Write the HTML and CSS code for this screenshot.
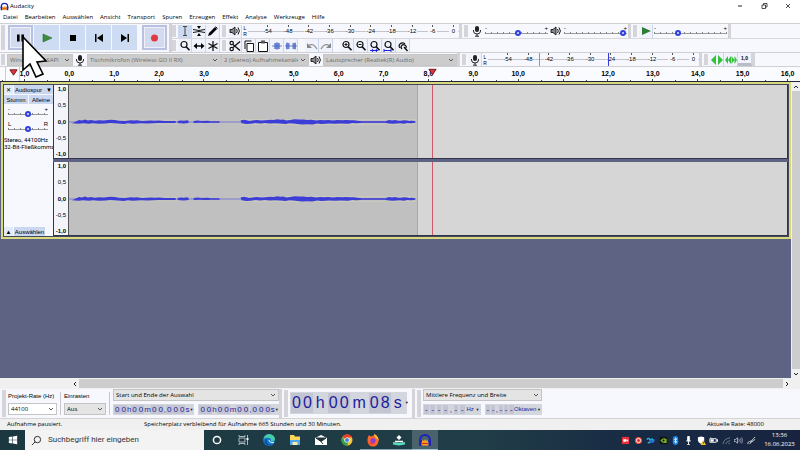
FILE: index.html
```html
<!DOCTYPE html>
<html lang="de">
<head>
  <meta charset="utf-8">
  <title>Audacity</title>
  <link rel="stylesheet" href="styles.css">
</head>
<body>

<!-- shared icons -->
<svg class="sprite" aria-hidden="true">
  <symbol id="mic" viewBox="0 0 12 12"><rect x="4" y="1" width="4" height="6" rx="2" fill="#222"/><path d="M2.500 5v1a3.500 3 0 0 0 7 0V5M6 9v2M4 11.200h4" fill="none" stroke="#222"/></symbol>
  <symbol id="speaker" viewBox="0 0 12 12"><path d="M1 4.500h2L6 2v8L3 7.500H1z" fill="#888" stroke="#111" stroke-width=".9"/><path d="M7.500 4q1.500 2 0 4M9 2.500q2.800 3.500 0 7" fill="none" stroke="#111"/></symbol>
  <symbol id="lens" viewBox="0 0 12 12"><circle cx="5" cy="4.500" r="3" fill="none" stroke="#111" stroke-width="1.200"/><path d="M7.200 6.700l3.300 3.600" stroke="#111" stroke-width="1.700"/></symbol>
  <symbol id="headphones" viewBox="0 0 14 14"><path d="M2 9V7a5 5 0 0 1 10 0v2" fill="none" stroke="#1c24b8" stroke-width="2"/><rect x="1" y="7" width="3" height="6" rx="1" fill="#1c24b8"/><rect x="10" y="7" width="3" height="6" rx="1" fill="#1c24b8"/><path d="M3.500 10l1-3 1.500 1 1-2 1 2 1.500-1 1 3v2.500h-7z" fill="#f9a21c"/><path d="M4 10.500h6" stroke="#d22"/></symbol>
</svg>

<header class="titlebar">
  <svg class="logo"><use href="#headphones"/></svg>
  <h1>Audacity</h1>
  <button class="win" aria-label="Minimieren"><svg viewBox="0 0 8 8"><path d="M2 4h4" stroke="#222"/></svg></button>
  <button class="win" aria-label="Verkleinern"><svg viewBox="0 0 8 8"><path d="M2 3h3.500v3.500H2zM3.500 3V1.500H7V5H5.500" fill="none" stroke="#222" stroke-width=".8"/></svg></button>
  <button class="win" aria-label="Schließen"><svg viewBox="0 0 8 8"><path d="M2 2l4 4M6 2L2 6" stroke="#222" stroke-width=".8"/></svg></button>
</header>

<nav class="menu">
  <a href="#">Datei</a><a href="#">Bearbeiten</a><a href="#">Auswählen</a><a href="#">Ansicht</a><a href="#">Transport</a><a href="#">Spuren</a><a href="#">Erzeugen</a><a href="#">Effekt</a><a href="#">Analyse</a><a href="#">Werkzeuge</a><a href="#">Hilfe</a>
</nav>

<div class="docks">
  <div class="transport">
    <i class="grip"></i>
    <button class="big pressed" aria-label="Pause"><svg viewBox="0 0 24 24"><path d="M8 8h3v8H8zM13 8h3v8h-3z"/></svg></button>
    <button class="big" aria-label="Wiedergabe"><svg viewBox="0 0 24 24"><path d="M8 8l9 4-9 4z" fill="#3d8b3d" stroke="#2d6b2d" stroke-width=".6"/></svg></button>
    <button class="big" aria-label="Stopp"><svg viewBox="0 0 24 24"><path d="M9 9h6v6H9z"/></svg></button>
    <button class="big" aria-label="Zum Anfang"><svg viewBox="0 0 24 24"><path d="M8 8h1.500v8H8zM16 8v8l-6-4z"/></svg></button>
    <button class="big" aria-label="Zum Ende"><svg viewBox="0 0 24 24"><path d="M14.500 8H16v8h-1.500zM8 8v8l6-4z"/></svg></button>
    <button class="big pressed record" aria-label="Aufnahme"><svg viewBox="0 0 24 24"><circle cx="12" cy="12" r="4" fill="#e0393f"/></svg></button>
  </div>

  <div class="rows">
    <div class="row">
      <i class="grip"></i>
      <button class="tool active" aria-label="Auswahlwerkzeug"><svg viewBox="0 0 12 12"><path d="M4 1.500h4M4 10.500h4M6 1.500v9" stroke="#444" fill="none"/></svg></button>
      <button class="tool" aria-label="Hüllkurve"><svg viewBox="0 0 12 12"><path d="M0 4.500l6 1 6-1M0 7.500l6-1 6 1" stroke="#111" fill="none"/><path d="M4 1h4L6 4zM4 11h4L6 8z"/></svg></button>
      <button class="tool" aria-label="Zeichnen"><svg viewBox="0 0 12 12"><path d="M1 11l1-3 6-6 2 2-6 6z"/><path d="M8.500 1.500l2 2" stroke="#111"/></svg></button>
      <i class="grip"></i>
      <button class="tool" aria-label="Wiedergabepegel"><svg><use href="#speaker"/></svg></button>
      <div class="lr"><span>L</span><span>R</span></div>
      <div class="meter"><span>-54</span><span>-48</span><span>-42</span><span>-36</span><span>-30</span><span>-24</span><span>-18</span><span>-12</span><span>-6</span><span>0</span></div>
      <i class="bar"></i><i class="grip"></i>
      <svg class="icon"><use href="#mic"/></svg>
      <div class="gain"><span>-</span><span>+</span><input type="range" value="53" aria-label="Aufnahmelautstärke"></div>
      <svg class="icon"><use href="#speaker"/></svg>
      <div class="gain"><span>-</span><span>+</span><input type="range" value="98" aria-label="Wiedergabelautstärke"></div>
      <i class="bar"></i><i class="grip"></i>
      <button class="tool" aria-label="Mit Geschwindigkeit abspielen"><svg viewBox="0 0 12 12"><path d="M2 2l9 4-9 4z" fill="#2f7d32"/></svg></button>
      <div class="gain speed"><span>-</span><span>+</span><input type="range" value="32" aria-label="Geschwindigkeit"></div>
      <i class="bar"></i>
    </div>
    <div class="row">
      <i class="grip"></i>
      <button class="tool" aria-label="Zoomwerkzeug"><svg><use href="#lens"/></svg></button>
      <button class="tool" aria-label="Verschieben"><svg viewBox="0 0 12 12"><path d="M2 6h8" stroke="#111" stroke-width="1.500"/><path d="M4 3L.5 6 4 9zM8 3l3.500 3L8 9z"/></svg></button>
      <button class="tool" aria-label="Multiwerkzeug"><svg viewBox="0 0 12 12"><path d="M6 1v10M1.500 3.500l9 5M10.500 3.500l-9 5" stroke="#111" stroke-width="1.300"/></svg></button>
      <i class="grip"></i>
      <button class="tool" aria-label="Ausschneiden"><svg viewBox="0 0 12 12"><path d="M11 1.500L4 7.500M11 10.500L4 4.500" stroke="#111" stroke-width="1.400"/><g fill="none" stroke="#111" stroke-width="1.200"><circle cx="2.700" cy="3" r="1.700"/><circle cx="2.700" cy="9" r="1.700"/></g></svg></button>
      <button class="tool" aria-label="Kopieren"><svg viewBox="0 0 12 12"><path d="M4 3.500h6.500v8H4z" fill="#fff" stroke="#111"/><path d="M2 9V1h6.500" fill="none" stroke="#111"/></svg></button>
      <button class="tool" aria-label="Einfügen"><svg viewBox="0 0 12 12"><path d="M1.500 2.500h9v9h-9z" fill="#fff" stroke="#111"/><path d="M4 .5h4v3H4z" fill="#555"/></svg></button>
      <button class="tool" aria-label="Zuschneiden"><svg viewBox="0 0 12 12"><path d="M3.500 3h5v6h-5z" fill="#7f9be0"/><path d="M1 6h10M4 3v6M6 2v8M8 3v6" stroke="#4d63bd" stroke-width=".8"/></svg></button>
      <button class="tool" aria-label="Stille"><svg viewBox="0 0 12 12"><path d="M1 3h3v6H1zM8 3h3v6H8z" fill="#7f9be0"/><path d="M0 6h12M2 2.500v7M4 3v6M8 3v6M10 2.500v7" stroke="#4d63bd" stroke-width=".8"/></svg></button>
      <i class="space"></i>
      <button class="tool" aria-label="Rückgängig"><svg viewBox="0 0 12 12"><path d="M2 6q5-4 9 3" fill="none" stroke="#888" stroke-width="1.200"/><path d="M1 3v5h5z" fill="#888"/></svg></button>
      <button class="tool" aria-label="Wiederholen"><svg viewBox="0 0 12 12"><path d="M10 6Q5 2 1 9" fill="none" stroke="#888" stroke-width="1.200"/><path d="M11 3v5H6z" fill="#888"/></svg></button>
      <i class="space"></i>
      <button class="tool" aria-label="Vergrößern"><svg viewBox="0 0 12 12"><use href="#lens"/><path d="M3.500 4.500h3M5 3v3" stroke="#111"/></svg></button>
      <button class="tool" aria-label="Verkleinern"><svg viewBox="0 0 12 12"><use href="#lens"/><path d="M3.500 4.500h3" stroke="#111"/></svg></button>
      <button class="tool" aria-label="Auswahl einpassen"><svg viewBox="0 0 12 12"><use href="#lens"/><path d="M1 10.500h8" stroke="#2222e0"/><path d="M3 8.500l2 2-2 2zM8 8.500l-2 2 2 2z" fill="#2222e0"/></svg></button>
      <button class="tool" aria-label="Projekt einpassen"><svg viewBox="0 0 12 12"><use href="#lens"/><path d="M1 10.500h7M1 9v3M8 9v3" stroke="#2222e0"/></svg></button>
      <button class="tool" aria-label="Zoom umschalten"><svg viewBox="0 0 12 12"><path d="M3 8a3 3 0 1 1 5-4M5 9a2.500 2.500 0 1 1 4-1" fill="none" stroke="#111" stroke-width="1.200"/><path d="M7 7l3.500 4" stroke="#111" stroke-width="1.500"/></svg></button>
    </div>
  </div>
</div>

<div class="devices">
  <i class="grip"></i>
  <select class="dd host" disabled aria-label="Audio-Host"><option>Windows WASAPI</option></select>
  <svg class="icon"><use href="#mic"/></svg>
  <select class="dd indev" disabled aria-label="Aufnahmegerät"><option>Tischmikrofon (Wireless GO II RX)</option></select>
  <select class="dd chans" disabled aria-label="Aufnahmekanäle"><option>2 (Stereo) Aufnahmekanäle</option></select>
  <svg class="icon"><use href="#speaker"/></svg>
  <select class="dd outdev" disabled aria-label="Wiedergabegerät"><option>Lautsprecher (Realtek(R) Audio)</option></select>
  <i class="bar"></i><i class="grip"></i>
  <button class="tool" aria-label="Aufnahmepegel"><svg><use href="#mic"/></svg></button>
  <div class="lr"><span>L</span><span>R</span></div>
  <div class="meter"><span>-54</span><span>-48</span><span>-42</span><span>-36</span><span>-30</span><span>-24</span><span>-18</span><span>-12</span><span>-6</span><span>0</span><i class="peak green"></i><i class="peak blue"></i></div>
  <i class="bar"></i><i class="grip"></i>
  <button class="tool" aria-label="Scrubben"><svg viewBox="0 0 12 12"><path d="M5 1v10L0 6zM7 1v10l5-5z" fill="#35c03c"/></svg></button>
  <button class="tool" aria-label="Spulen"><svg viewBox="0 0 12 12"><path d="M3 2v8L0 6zM6 2v8L3 6zM6.500 2v8l3-4zM9.500 2v8L12 6z" fill="#35c03c"/></svg></button>
  <button class="tool ruler-btn" aria-label="Lineal">1,0</button>
  <i class="bar"></i>
</div>

<div class="timeline">
  <div class="ticks"><span>1,0</span><span>0,0</span><span>1,0</span><span>2,0</span><span>3,0</span><span>4,0</span><span>5,0</span><span>6,0</span><span>7,0</span><span>8,0</span><span>9,0</span><span>10,0</span><span>11,0</span><span>12,0</span><span>13,0</span><span>14,0</span><span>15,0</span><span>16,0</span></div>
  <div class="pin-box"><svg viewBox="0 0 10 8"><path d="M1 1h8L5 7z" fill="#e03540" stroke="#611"/></svg></div>
  <svg class="playhead" viewBox="0 0 10 8"><path d="M1 1h8L5 7z" fill="#e03540" stroke="#611"/></svg>
</div>

<main class="workspace">
  <div class="tracks">
    <section class="track">
      <div class="panel">
        <div class="pair"><button class="close" aria-label="Spur schließen">✕</button><button class="name">Audiospur <b>▼</b></button></div>
        <div class="pair"><button>Stumm</button><button>Alleine</button></div>
        <div class="gain"><span>-</span><span>+</span><input type="range" value="50" aria-label="Lautstärke"></div>
        <div class="gain"><span>L</span><span>R</span><input type="range" value="50" aria-label="Balance"></div>
        <p>Stereo, 44100Hz<br>32-Bit-Fließkomma</p>
        <div class="pair foot"><button class="close" aria-label="Einklappen">▲</button><button class="name">Auswählen</button></div>
      </div>
      <div class="channels">
        <div class="channel">
          <div class="scale"><b>1,0</b><span>0,5</span><b>0,0</b><span>-0,5</span><b>-1,0</b></div>
          <div class="wave">
            <svg viewBox="0 0 720 12" preserveAspectRatio="none">
              <g id="samples">
                <path d="M0 6h348" stroke="#7b7bd0"/>
                <path d="M172 3.500h145M8 4h100M318 3.500h29M172 8.500h145M8 8h100M318 8.500h29" stroke="#cfcfb8" stroke-width=".6"/>
                <path d="M8 5l2-1 3 .5 3-1 3 1 3-.5 4 .7 4-.5 5 .3 4-.6 3-.2 4 .3 4 .7 6 .2 6-.6 3 .3 3-.4 5 .7 5-.2 4-.3 4 .4 4-.3 6 .6h11v1.800H89l-5 .4-5 .3-7-.3-8 .4-5-.4-4 .6-6-.3-8-.7-4 .6-7 .3-6-.6-4 .5-6-.5-4 .5-7-.4z" fill="#3c3cd6"/>
                <path d="M109 5l3-.5 3 .2 4-.4 1 1v1.800l-5 .4-6-.5zM125 5l4-.4 4 .4 6-.3 3 .6h9v1.400h-9l-5 .4-5-.4-7 .2z" fill="#3c3cd6"/>
                <path d="M172 4.500l3-.7 3 .4 3 .8 3-.5 4-.6 5 .6 4-.3 5-.5 3 .3 4-.7 3 .4 3-.3 3 1 4-.4 4-.7 5 .3 4-.2 4 .6 4-.3 5 .7 4-.4 4 .3 4-.4 5 .5 4-.4 5 .2 4-.3 4 .4 4-.1 3 .5 5 .5h43v1.600h-43l-5 .5-5-.2-4 .6-8-.3-5 .4-6-.3-8 .4-4-.3-5 .8-5-.2-5 .4-5-.6-4-.6-4-.2-4 .7-5-.3-6-.4-4 .3-6-.4-4 .5-5-.5-5 .6-4 .2-5-.6z" fill="#3c3cd6"/>
                <path d="M318 5l3-1 3 .4 3-.4 3 .7 3 .1 3-.6 3 .2 2 .6 3-.2 3 .4v1.500l-4 .5-4-.1-3 .6-4-.5-4 .2-3 .4-4-.4-3-.3z" fill="#3c3cd6"/>
              </g>
            </svg>
          </div>
        </div>
        <div class="channel">
          <div class="scale"><b>1,0</b><span>0,5</span><b>0,0</b><span>-0,5</span><b>-1,0</b></div>
          <div class="wave"><svg viewBox="0 0 720 12" preserveAspectRatio="none"><use href="#samples"/></svg></div>
        </div>
      </div>
    </section>
  </div>
  <div class="vscroll">
    <button aria-label="Nach oben"><svg viewBox="0 0 8 8"><path d="M2 5l2-2 2 2" fill="none" stroke="#222"/></svg></button>
    <button aria-label="Nach unten"><svg viewBox="0 0 8 8"><path d="M2 3l2 2 2-2" fill="none" stroke="#222"/></svg></button>
  </div>
</main>

<div class="hscroll">
  <button aria-label="Nach links"><svg viewBox="0 0 8 8"><path d="M5 2L3 4l2 2" fill="none" stroke="#222"/></svg></button>
  <div class="thumb"></div>
  <button aria-label="Nach rechts"><svg viewBox="0 0 8 8"><path d="M3 2l2 2-2 2" fill="none" stroke="#222"/></svg></button>
</div>

<div class="bottom">
  <i class="grip"></i>
  <div class="field rate"><label for="rate">Projekt-Rate (Hz)</label><select id="rate" class="dd white"><option>44100</option></select></div>
  <i class="sep"></i>
  <div class="field snap"><label for="snap">Einrasten</label><select id="snap" class="dd"><option>Aus</option></select></div>
  <i class="sep"></i>
  <div class="field range">
    <select class="dd" aria-label="Auswahlart"><option>Start und Ende der Auswahl</option></select>
    <div class="times">
      <div class="time"><b>0</b><b>0</b><i>h</i><b>0</b><b>0</b><i>m</i><b>0</b><b>0</b><i>,</i><b>0</b><b>0</b><b>0</b><i>s</i><u>▼</u></div>
      <div class="time"><b>0</b><b>0</b><i>h</i><b>0</b><b>0</b><i>m</i><b>0</b><b>0</b><i>,</i><b>0</b><b>0</b><b>0</b><i>s</i><u>▼</u></div>
    </div>
  </div>
  <i class="bar"></i><i class="grip"></i>
  <div class="time clock-big"><b>0</b><b>0</b><i>h</i><b>0</b><b>0</b><i>m</i><b>0</b><b>8</b><i>s</i><u>▼</u></div>
  <i class="bar"></i><i class="grip"></i>
  <div class="field freq">
    <select class="dd" aria-label="Spektralauswahl"><option>Mittlere Frequenz und Breite</option></select>
    <div class="times">
      <div class="time"><b>-</b><b>-</b><b>-</b><b>-</b><i>,</i><b>-</b><b>-</b><em>Hz</em><u>▼</u></div>
      <div class="time"><b>-</b><b>-</b><i>,</i><b>-</b><b>-</b><b>-</b><em>Oktaven</em><u>▼</u></div>
    </div>
  </div>
</div>

<footer class="status">
  <span class="state">Aufnahme pausiert.</span>
  <span class="disk">Speicherplatz verbleibend für Aufnahme 665 Stunden und 30 Minuten.</span>
  <span class="actual">Aktuelle Rate: 48000</span>
</footer>

<div class="taskbar">
  <button class="start" aria-label="Start"><svg viewBox="0 0 12 12"><path d="M1 2.500l4.300-.7v3.900H1zM6 1.700l5-.7v4.700H6zM1 6.300h4.300v3.900L1 9.500zM6 6.300h5V11l-5-.7z" fill="#fff"/></svg></button>
  <label class="search"><svg viewBox="0 0 12 12"><circle cx="7" cy="5" r="3.500" fill="none" stroke="#222"/><path d="M4.500 7.500L1 11" stroke="#222"/></svg><input type="text" placeholder="Suchbegriff hier eingeben" aria-label="Suche"></label>
  <button class="app" aria-label="Cortana"><svg viewBox="0 0 14 14"><circle cx="7" cy="7" r="3.600" fill="none" stroke="#fff" stroke-width="1.500"/></svg></button>
  <button class="app" aria-label="Aktive Anwendungen"><svg viewBox="0 0 14 14"><path d="M3 5h6v4H3zM3 2v1.500h6V2M3 12v-1.500h6V12M11.500 2v10" fill="none" stroke="#cdd6d8" stroke-width=".8"/><path d="M10.500 5h2v2h-2z" fill="#fff"/></svg></button>
  <button class="app" aria-label="Edge"><svg viewBox="0 0 14 14"><circle cx="7" cy="7" r="6" fill="#1679cf"/><path d="M1.500 6Q3 1 7.500 1q5.500 1 5.500 5.500Q12 9 8.500 8.500 10 6 7.500 5 4 4 1.500 6z" fill="#45cfa5"/><path d="M5 7.500q-.5 4 5.500 4.500-5 2-8-2Q2 6.500 5 5.500z" fill="#0d55a5"/><path d="M7 7q0 3 5 2.500" stroke="#dff" fill="none"/></svg></button>
  <button class="app" aria-label="Explorer"><svg viewBox="0 0 14 14"><path d="M2 2h4l1 1.500h5v8H2z" fill="#ffd45a"/><path d="M2 7h10v5H2z" fill="#4aa8e8"/><path d="M4.500 9h5v3h-5z" fill="#ffe9a8"/></svg></button>
  <button class="app" aria-label="Mail"><svg viewBox="0 0 14 14"><path d="M1 5l6-3 6 3v7H1z" fill="#fff"/><path d="M2 5h10l-5 3.500zM7 8.500L9 11" fill="#20323b" stroke="#20323b"/></svg></button>
  <button class="app" aria-label="Chrome"><svg viewBox="0 0 14 14"><circle cx="7" cy="7" r="5.500" fill="#f9c62c"/><path d="M7 7L2.200 4.200A5.500 5.500 0 0 1 12 4.500H7z" fill="#e5402f"/><path d="M2.200 4.200A5.500 5.500 0 0 0 7 12.500L9 8 5 8z" fill="#2fa04f"/><circle cx="7" cy="7" r="2.600" fill="#fff"/><circle cx="7" cy="7" r="2" fill="#3f80ee"/></svg></button>
  <button class="app open" aria-label="Firefox"><svg viewBox="0 0 14 14"><path d="M2 4l1-2 1.500 1.500Q6 3 7 3L8.500 1Q13 4 12.500 8A5.500 5.500 0 0 1 1.500 8Q1.300 6 2 4z" fill="#ff6a2b"/><path d="M8.500 1Q13 4 12.500 8 12 6 10 5 8 3.500 8.500 1z" fill="#ffc63a"/><circle cx="7" cy="7.500" r="2.600" fill="#8a3fd0"/><path d="M2 8q2 3 7 2-3 3-6 0z" fill="#f9314f"/></svg></button>
  <button class="app open" aria-label="Filmora"><svg viewBox="0 0 14 14"><path d="M7 2l2.500 2.500L7 7 4.500 4.500z" fill="#fff"/><path d="M1 9l6 1 6-1v2.500l-6 1-6-1z" fill="#56dcc2"/><path d="M3 8.500h8" stroke="#fff" stroke-width="1.500"/></svg></button>
  <button class="app current" aria-label="Audacity"><svg><use href="#headphones"/></svg></button>
  <div class="tray">
    <svg viewBox="0 0 10 10"><path d="M1 1h8v8H1z" fill="#e8303a"/><path d="M2.500 3.500h3.500v3H2.500zM6 5l2-1.500v3z" fill="#fff"/></svg>
    <svg viewBox="0 0 10 10"><circle cx="5" cy="5" r="4" fill="#e8483c"/><circle cx="5" cy="5" r="2.300" fill="#d33" stroke="#fff"/></svg>
    <svg viewBox="0 0 10 10"><path d="M1 4q2-3 4 1t4-1M2 7q2 2 3-2 2-4 3 1" fill="none" stroke="#26b5e8" stroke-width="1.500"/><path d="M5 5q2 4 4 0" stroke="#2b59e8" fill="none" stroke-width="1.500"/></svg>
    <svg viewBox="0 0 10 10"><path d="M1 1h8v8H1z" fill="#111"/><path d="M1.500 5q3-4 7-1.500v4Q4 9 1.500 5z" fill="#77b52a"/><circle cx="5" cy="5" r="1.200" fill="#111"/></svg>
    <svg viewBox="0 0 10 10"><rect x="2" y="0" width="6" height="10" rx="3" fill="#1b86e8"/><path d="M3.500 3.500l3 3L5 8V2l1.500 1.500-3 3" fill="none" stroke="#fff" stroke-width=".8"/></svg>
    <svg viewBox="0 0 10 10"><rect x="3.500" y="0" width="3" height="6" rx="1" fill="#fff"/><path d="M2.500 5.500h5M5 6v3M3.500 9.500h3" stroke="#fff"/></svg>
    <svg viewBox="0 0 10 10"><path d="M1 1.500L4.500.5 8 1.500V5q0 2-3.500 4Q1 7 1 5z" fill="#fff"/><path d="M7 4.500L10 10H4z" fill="#f7c22c"/><path d="M7 6.500v2" stroke="#222" stroke-width=".8"/></svg>
    <svg viewBox="0 0 10 10"><path d="M1 3h7v4H1z" fill="none" stroke="#fff"/><path d="M2 4h3v2H2zM9 4h1v2H9zM2 1v2" fill="#fff" stroke="#fff" stroke-width=".5"/></svg>
    <svg viewBox="0 0 10 10"><path d="M1 9q1-6 8-7M4 9q1-3 5-4M7 9q0-1 2-1" fill="none" stroke="#8a95a5" stroke-width=".8"/></svg>
    <svg viewBox="0 0 10 10"><path d="M0 4h1.500L4 2v6L1.500 6H0z" fill="none" stroke="#ddd" stroke-width=".8"/><path d="M5.500 3.500q1 1.500 0 3M7 2.500q1.700 2.500 0 5M8.500 1.500q2.200 3.500 0 7" fill="none" stroke="#aab" stroke-width=".8"/></svg>
    <svg viewBox="0 0 10 10"><path d="M1 9q-1-2 2-3 3 0 4-3l2-2M4 7l3-1.500 2-2M3 9l2-3" fill="none" stroke="#ddd"/></svg>
  </div>
  <div class="datetime"><span>13:36</span><span>16.06.2023</span></div>
</div>

<!-- mouse pointer -->
<svg class="pointer" viewBox="0 0 26 42"><path d="M1 1v33l7-6 6 13 7-3-6-12 9-1z" fill="#fff" stroke="#000" stroke-width="1.600"/></svg>

</body>
</html>
```
FILE: styles.css
```css
* {box-sizing: border-box}

body {
  margin: 0;
  min-height: 100vh;
  display: flex;
  flex-direction: column;
  position: relative;
  overflow: hidden;
  background: #fff;
  color: #000;
  font: 6px/8px "Open Sans", "Noto Sans", sans-serif;
}

button, input, select {
  font: inherit;
  color: inherit;
  margin: 0;
  padding: 0;
  border: 0;
  background: none;
}

button {
  display: flex;
  align-items: center;
  justify-content: center;
}

i, em {font-style: normal}
a {color: inherit; text-decoration: none}
.sprite {display: none}

/* title and menu */
.titlebar {
  display: flex;
  align-items: center;
  height: 12px;
}

.titlebar h1 {
  flex: 1;
  margin: 0 0 0 1px;
  font-size: 6px;
  font-weight: normal;
}

.logo {width: 9px; height: 9px}
.win {width: 24px; height: 12px}
.win svg {width: 8px; height: 8px}

.menu {
  display: flex;
  gap: 7px;
  height: 11px;
  padding: 1px 3px;
  line-height: 9px;
}

/* toolbars */
.docks {
  display: flex;
  border-top: 1px solid #d0d0d4;
  background: #f7f8fd;
}

.transport {
  display: flex;
  align-items: center;
  gap: 1px;
  height: 28px;
  padding: 0 2px 1px 1px;
  border-right: 3px solid #d2d2d6;
}

.grip {
  flex: none;
  align-self: stretch;
  width: 4px;
  margin: 1px 2px 1px 0;
  background: radial-gradient(#d4d4da 1px, transparent 1px) 0 0 / 2px 2px;
}

.big {
  width: 25px;
  height: 25px;
  background: #cddcf2;
}

.big svg {width: 24px; height: 24px}

.pressed {
  border: 2px solid #b9c1e2;
  background: #d3d9ef;
  box-shadow: inset 0 0 0 1px #eef0fa;
}

.record {margin-left: 4px}

.rows {flex: 1}

.row {
  display: flex;
  align-items: center;
  height: 14px;
}

.row + .row {border-top: 1px solid #d8d8dc}

.tool {
  flex: none;
  width: 14px;
  height: 13px;
  border-right: 1px solid #ccd6ea;
  background: #f0f3fb;
}

.tool svg {width: 12px; height: 12px}
.tool.active {background: #ccd9f1}
.tool + .grip {margin-left: 2px}
.icon {flex: none; width: 12px; height: 12px; margin: 0 1px}
.space {width: 7px}

.bar {
  flex: none;
  align-self: stretch;
  width: 3px;
  margin-right: 2px;
  background: #d4d4d8;
}

.lr {
  display: flex;
  flex-direction: column;
  width: 6px;
  text-align: center;
  font: 5px/6px "Liberation Sans", sans-serif;
}

.meter {
  position: relative;
  display: flex;
  justify-content: space-between;
  flex: none;
  width: 211px;
  height: 13px;
  padding-left: 14px;
  background: linear-gradient(#c5c5ca, #c5c5ca) 0 6px / 100% 1px no-repeat;
  font: 6px/13px "Liberation Sans", sans-serif;
}

.meter span {
  width: 11px;
  text-align: center;
  background: linear-gradient(#555, #555) 50% 0 / 1px 2px no-repeat, linear-gradient(#f7f8fd, #f7f8fd) 50% 4px / 9px 6px no-repeat;
}

.peak {
  position: absolute;
  top: 0;
  bottom: 0;
  left: 24%;
  width: 1px;
  background: #4fc84f;
}

.peak.blue {left: 57%; background: #3a3ad8}

.gain {
  display: flex;
  flex-wrap: wrap;
  justify-content: space-between;
  width: 65px;
  padding: 0 1px;
  font: 6px/4px "Liberation Sans", sans-serif;
}

.speed {width: 75px}

input[type=range] {
  appearance: none;
  width: 100%;
  height: 6px;
  background: repeating-linear-gradient(90deg, #888 0 1px, transparent 1px 6px) 0 2px / 100% 2px no-repeat, linear-gradient(#999, #999) 0 3px / 100% 1px no-repeat;
}

input[type=range]::-webkit-slider-thumb {
  appearance: none;
  width: 6px;
  height: 6px;
  border: 2px solid #2f3fe0;
  border-radius: 50%;
  background: #dfe4ff;
}

.devices {
  display: flex;
  align-items: center;
  height: 15px;
  padding-left: 1px;
  border: solid #d0d0d4;
  border-width: 1px 0;
  background: #f7f8fd;
}

.dd {
  appearance: none;
  height: 12px;
  padding: 0 10px 0 2px;
  border: 1px solid #c4c4c4;
  background: #e4e4e4 url("data:image/svg+xml,%3Csvg xmlns='http://www.w3.org/2000/svg' viewBox='0 0 8 8'%3E%3Cpath d='M2 3l2 2 2-2' fill='none' stroke='%23555'/%3E%3C/svg%3E") right 1px center / 8px 8px no-repeat;
  line-height: 10px;
}

.dd.white {background-color: #fff}

.dd:disabled {
  border-color: #c6c6c6;
  background-color: #ccc;
  color: #6d6d6d;
  opacity: 1;
}

.host {width: 66px}
.indev {width: 134px}
.chans {width: 88px}
.outdev {width: 134px}

.ruler-btn {
  border-bottom: 3px solid #b8bcc6;
  font: bold 5px/8px "Liberation Sans", sans-serif;
}

/* timeline */
.timeline {
  position: relative;
  height: 15px;
  overflow: hidden;
  border-bottom: 1px solid #222633;
  background: #fafbff;
}

.ticks {
  display: grid;
  grid-template-columns: repeat(18, 1fr);
  margin: 0 -10px 0 2px;
  font: bold 7px/10px "Liberation Sans", sans-serif;
  text-align: center;
}

.ticks span {
  height: 14px;
  padding-top: 2px;
  background: linear-gradient(#444, #444) 50% 12px / 1px 2px no-repeat, linear-gradient(#444, #444) 0 13px / 1px 1px no-repeat;
}

.pin-box {
  position: absolute;
  top: 0;
  left: 5px;
  width: 15px;
  height: 14px;
  padding: 1px 3px;
  background: #fafbff;
  border: solid #ccc;
  border-width: 0 1px;
}

.pin-box svg {width: 9px; height: 9px}

.playhead {
  position: absolute;
  top: 1px;
  left: 53.5%;
  width: 9px;
  height: 8px;
}

/* tracks */
.workspace {
  flex: 1;
  display: flex;
  min-height: 0;
  background: #5e6384;
}

.tracks {
  flex: 1;
  padding-left: 1px;
}

.track {
  display: flex;
  height: 157px;
  padding: 1px;
  border: 2px solid #d8d87c;
  outline: 1px solid #44485c;
  outline-offset: -3px;
}

.panel {
  display: flex;
  flex-direction: column;
  width: 49px;
  background: #f7f8fd;
  font: 6px/8px "Liberation Sans", sans-serif;
}

.pair {
  display: flex;
  gap: 1px;
  margin-bottom: 1px;
}

.pair button {
  flex: 1;
  height: 9px;
  background: #c9d7f1;
}

.pair .close {flex: 0 0 9px; background: #e3eaf8}
.pair b {margin-left: 4px}
.panel .gain {width: 42px; margin: 2px 0 3px 3px}
.panel p {margin: 1px 0 0; font: 6px/7px Roboto, sans-serif; white-space: nowrap}
.foot {margin: auto 8px 0 0}

.channels {
  flex: 1;
  display: flex;
  flex-direction: column;
  gap: 3px;
}

.channel {
  flex: 1;
  display: flex;
  border: solid #33364a;
  border-width: 0 1px 1px;
}

.scale {
  display: flex;
  flex-direction: column;
  justify-content: space-between;
  width: 15px;
  padding-right: 2px;
  border-right: 1px solid #555;
  background: #f4f5fa;
  font: 6px/8px "Liberation Sans", sans-serif;
  text-align: right;
}

.wave {
  flex: 1;
  display: flex;
  align-items: center;
  background: linear-gradient(#d2586a, #d2586a) 50.6% 0 / 1px 100% no-repeat, linear-gradient(90deg, #c0c0c0 48.4%, #a8a8a8 48.4% 48.6%, #d6d6d6 48.6%);
}

.wave svg {width: 100%; height: 12px}

/* scrollbars */
.vscroll {
  display: flex;
  flex-direction: column;
  justify-content: space-between;
  width: 9px;
  background: #cdcdcd;
  border-left: 1px solid #f0f0f0;
}

.vscroll button {width: 8px; height: 9px; background: #f0f0f0}
.vscroll svg, .hscroll svg {width: 8px; height: 8px}

.hscroll {
  display: flex;
  height: 11px;
  padding: 1px 9px 1px 71px;
  background: #f0f0f0;
}

.hscroll .thumb {flex: 1; background: #cdcdcd}

/* selection toolbars */
.bottom {
  display: flex;
  align-items: stretch;
  height: 29px;
  padding: 0 2px;
  background: #f7f8fd;
}

.field {
  display: flex;
  flex-direction: column;
  justify-content: space-between;
  padding: 0 0 3px;
}

.field label {
  padding-top: 3px;
  font: 6px/8px "Liberation Sans", sans-serif;
  white-space: nowrap;
}

.rate {width: 49px}
.snap {width: 42px}
.range {width: 166px}
.freq {width: 119px}
.sep {width: 1px; margin: 3px; background: #c8c8cc}

.times {display: flex; gap: 4px}

.time {
  flex: 1;
  display: flex;
  justify-content: space-between;
  padding: 1px;
  background: #d4d6de;
  color: #1c1c9c;
  font: 8px/9px "Liberation Sans", sans-serif;
}

.time b {padding: 0 1px; background: #c3c6d2; font-weight: normal}
.time u {color: #222; font-size: 4px; text-decoration: none}
.time em {font-size: 6px}

.clock-big {
  flex: none;
  width: 117px;
  height: 22px;
  margin: 3px 5px 0 0;
  padding: 1px 0 1px 1px;
  font: 16px/20px "Liberation Sans", sans-serif;
}

.clock-big i {padding: 0 3px}

/* status */
.status {
  display: flex;
  height: 12px;
  border-top: 1px solid #d4d4d4;
  background: #f0f0f0;
  line-height: 11px;
}

.state {width: 144px; padding-left: 7px}
.disk {flex: 1}
.actual {width: 93px}

/* windows taskbar */
.taskbar {
  display: flex;
  align-items: center;
  height: 20px;
  background: linear-gradient(90deg, #1b3740, #213d47 60%, #172a44 80%, #18243f);
  color: #fff;
}

.start {width: 25px}
.start svg {width: 10px; height: 10px}

.search {
  display: flex;
  align-items: center;
  gap: 6px;
  width: 179px;
  height: 20px;
  padding-left: 6px;
  background: #f3f3f3;
  color: #333;
}

.search svg {width: 11px; height: 11px}
.search input {flex: 1; min-width: 0; font: 8px/10px Roboto, sans-serif}
.search input::placeholder {color: #333; opacity: 1}

.app {
  width: 26px;
  height: 20px;
}

.app svg {width: 14px; height: 14px}
.app.open {border-bottom: 1px solid #7fa3b5}
.app.current {background: #4a626c; border-bottom: 1px solid #9dc3d8}

.tray {
  display: flex;
  justify-content: space-between;
  width: 135px;
  margin-left: auto;
}

.tray svg {width: 9px; height: 9px}

.datetime {
  display: flex;
  flex-direction: column;
  align-items: center;
  width: 41px;
  margin-left: 3px;
  line-height: 9px;
}

.pointer {
  position: absolute;
  top: 36px;
  left: 22px;
  width: 26px;
  height: 42px;
}
```
